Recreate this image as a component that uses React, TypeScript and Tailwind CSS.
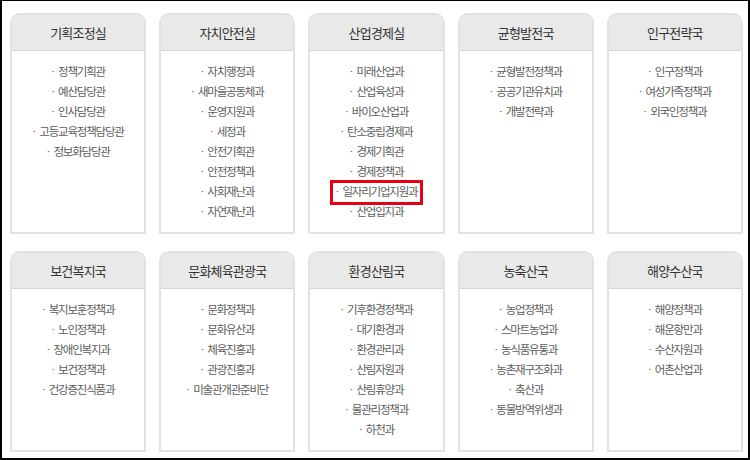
import React from 'react';

type Dept = { title: string; items: string[] };

const rows: Dept[][] = [
  [
    { title: '기획조정실', items: ['정책기획관', '예산담당관', '인사담당관', '고등교육정책담당관', '정보화담당관'] },
    {
      title: '자치안전실',
      items: ['자치행정과', '새마을공동체과', '운영지원과', '세정과', '안전기획관', '안전정책과', '사회재난과', '자연재난과'],
    },
    {
      title: '산업경제실',
      items: ['미래산업과', '산업육성과', '바이오산업과', '탄소중립경제과', '경제기획관', '경제정책과', '일자리기업지원과', '산업입지과'],
    },
    { title: '균형발전국', items: ['균형발전정책과', '공공기관유치과', '개발전략과'] },
    { title: '인구전략국', items: ['인구정책과', '여성가족정책과', '외국인정책과'] },
  ],
  [
    { title: '보건복지국', items: ['복지보훈정책과', '노인정책과', '장애인복지과', '보건정책과', '건강증진식품과'] },
    { title: '문화체육관광국', items: ['문화정책과', '문화유산과', '체육진흥과', '관광진흥과', '미술관개관준비단'] },
    {
      title: '환경산림국',
      items: ['기후환경정책과', '대기환경과', '환경관리과', '산림자원과', '산림휴양과', '물관리정책과', '하천과'],
    },
    { title: '농축산국', items: ['농업정책과', '스마트농업과', '농식품유통과', '농촌재구조화과', '축산과', '동물방역위생과'] },
    { title: '해양수산국', items: ['해양정책과', '해운항만과', '수산자원과', '어촌산업과'] },
  ],
];

const highlighted = '일자리기업지원과';

const DeptCard = ({ dept }: { dept: Dept }) => (
  <div className="flex flex-col rounded-t-[10px] border-2 border-[#e2e2e2] bg-white">
    <div className="flex h-[36px] items-center justify-center rounded-t-[8px] border-b border-[#d4d4d4] bg-[#e9e9e9] text-[13px] tracking-[-0.8px] text-[#333]">
      {dept.title}
    </div>
    <ul className="flex flex-col items-center pt-[11px] pb-[10px]">
      {dept.items.map((item) => (
        <li key={item} className="flex h-[20px] items-center text-[11.5px] tracking-[-1.2px] text-[#5c5c5c]">
          <span
            className={
              item === highlighted
                ? 'flex h-[19px] items-center px-[3px] outline-[3px] outline-[#e60012]'
                : 'flex items-center'
            }
          >
            <span className="mr-[3px] font-['Liberation_Sans'] tracking-normal">·</span>
            {item}
          </span>
        </li>
      ))}
    </ul>
  </div>
);

export default function App() {
  return (
    <div className="h-[460px] w-[750px] border-2 border-t border-black bg-white font-['Noto_Sans_CJK_KR',sans-serif]">
      <div className="flex flex-col gap-[17px] pt-[12px] pl-[8px] pr-[5px]">
        {rows.map((row, i) => (
          <div key={i} className="grid grid-cols-5 gap-x-[13px]">
            {row.map((dept) => (
              <DeptCard key={dept.title} dept={dept} />
            ))}
          </div>
        ))}
      </div>
    </div>
  );
}
